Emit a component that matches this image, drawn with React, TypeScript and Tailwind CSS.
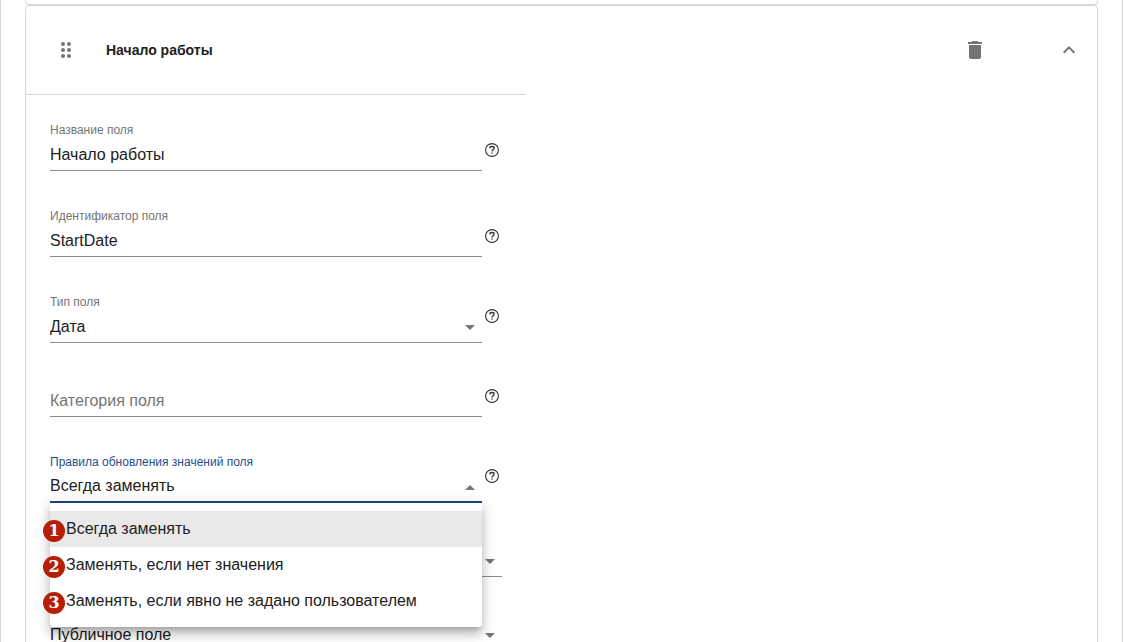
import { useState } from "react";
import type { ReactNode } from "react";
import { MdDelete, MdExpandLess } from "react-icons/md";
import { clsx } from "clsx";

const UPDATE_RULES = [
  "Всегда заменять",
  "Заменять, если нет значения",
  "Заменять, если явно не задано пользователем",
];

export default function App() {
  const [name, setName] = useState("Начало работы");
  const [identifier, setIdentifier] = useState("StartDate");
  const [category, setCategory] = useState("");

  return (
    <main className="mr-px h-screen overflow-hidden border-x border-[#d3d8de] bg-white px-6 font-['Liberation_Sans',Arial,sans-serif] text-[#212121]">
      {/* Bottom edge of the previous field card */}
      <div className="h-[5px] rounded-b border border-t-0 border-[#d3d8de]" />

      <section className="rounded border border-[#d3d8de]">
        <header className="flex h-[88px] items-center pr-4 pl-7 text-[#757575]">
          <button type="button" aria-label="Переместить" className="cursor-move">
            <DragIcon />
          </button>
          <h2 className="ml-7 flex-1 text-sm font-bold text-[#212121]">Начало работы</h2>
          <button type="button" aria-label="Удалить">
            <MdDelete className="size-6" />
          </button>
          <button type="button" aria-label="Свернуть" className="ml-[70px]">
            <MdExpandLess className="size-6" />
          </button>
        </header>

        <form className="flex max-w-[500px] flex-col gap-9 border-t border-[#d3d8de] px-6 pt-[26px] pb-10">
          <Field id="name" label="Название поля" help="top">
            <TextInput id="name" value={name} onChange={setName} />
          </Field>
          <Field id="identifier" label="Идентификатор поля" help="top">
            <TextInput id="identifier" value={identifier} onChange={setIdentifier} />
          </Field>
          <Field id="type" label="Тип поля" help="raised">
            <Select id="type" options={["Дата", "Строка", "Число"]} />
          </Field>
          <Field id="category" help="top">
            <TextInput id="category" placeholder="Категория поля" value={category} onChange={setCategory} />
          </Field>
          <UpdateRuleField />
          <Field id="storage">
            <Select id="storage" ariaLabel="Хранение" options={[""]} />
          </Field>
          <Field id="access">
            <Select id="access" ariaLabel="Доступ" options={["Публичное поле", "Приватное поле"]} />
          </Field>
        </form>
      </section>
    </main>
  );
}

function Field({
  id,
  label,
  help,
  active,
  children,
}: {
  id: string;
  label?: string;
  help?: "top" | "raised";
  active?: boolean;
  children: ReactNode;
}) {
  return (
    <div className={clsx("flex items-end gap-[3px]", !label && "pt-1.5")}>
      <div className="min-w-0 flex-1">
        {label && (
          <label
            htmlFor={id}
            className={clsx("block text-xs leading-[18px]", active ? "text-[#1f4e8c]" : "text-[#757575]")}
          >
            {label}
          </label>
        )}
        {children}
      </div>
      {help && (
        <button
          type="button"
          aria-label="Справка"
          className={clsx("mr-[3px] shrink-0", help === "raised" ? "mb-5" : "mb-3.5")}
        >
          <HelpIcon />
        </button>
      )}
    </div>
  );
}

function TextInput({
  id,
  value,
  placeholder,
  onChange,
}: {
  id: string;
  value: string;
  placeholder?: string;
  onChange: (value: string) => void;
}) {
  return (
    <input
      id={id}
      type="text"
      value={value}
      placeholder={placeholder}
      aria-label={placeholder}
      onChange={(e) => onChange(e.target.value)}
      className="block h-8 w-full border-b border-[#8c8c8c] bg-transparent text-base outline-none placeholder:text-[#757575]"
    />
  );
}

function Select({ id, options, ariaLabel }: { id: string; options: string[]; ariaLabel?: string }) {
  return (
    <div className="relative">
      <select
        id={id}
        aria-label={ariaLabel}
        className="block h-8 w-full appearance-none border-b border-[#8c8c8c] bg-transparent text-base outline-none"
      >
        {options.map((option) => (
          <option key={option}>{option}</option>
        ))}
      </select>
      <Arrow />
    </div>
  );
}

function UpdateRuleField() {
  const [open, setOpen] = useState(true);
  const [rule, setRule] = useState(UPDATE_RULES[0]);

  return (
    <Field id="rule" label="Правила обновления значений поля" help="raised" active={open}>
      <div className="relative">
        <select
          id="rule"
          value={rule}
          onChange={(e) => setRule(e.target.value)}
          onMouseDown={(e) => {
            e.preventDefault();
            setOpen(!open);
          }}
          className={clsx(
            "block h-8 w-full appearance-none bg-transparent text-base outline-none",
            open ? "border-b-2 border-[#1f477f]" : "border-b border-[#8c8c8c]"
          )}
        >
          {UPDATE_RULES.map((option) => (
            <option key={option}>{option}</option>
          ))}
        </select>
        <Arrow up={open} />

        {open && (
          <ul
            role="listbox"
            className="absolute inset-x-0 top-full z-10 rounded-b bg-white py-2 shadow-[0_5px_5px_-3px_rgba(0,0,0,0.2),0_8px_10px_1px_rgba(0,0,0,0.14),0_3px_14px_2px_rgba(0,0,0,0.12)]"
          >
            {UPDATE_RULES.map((option, index) => (
              <li
                key={option}
                role="option"
                aria-selected={option === rule}
                onClick={() => {
                  setRule(option);
                  setOpen(false);
                }}
                className={clsx(
                  "relative h-9 cursor-pointer px-4 text-base leading-9",
                  option === rule && "bg-[#e9e9e9]"
                )}
              >
                <span className="absolute top-[9px] -left-[7px] flex size-[22px] items-center justify-center rounded-full bg-[#b51f05] font-['DejaVu_Serif',serif] text-base leading-none font-bold text-white">
                  {index + 1}
                </span>
                {option}
              </li>
            ))}
          </ul>
        )}
      </div>
    </Field>
  );
}

function Arrow({ up }: { up?: boolean }) {
  return (
    <svg
      viewBox="0 0 10 5"
      fill="#757575"
      aria-hidden="true"
      className={clsx("pointer-events-none absolute right-[7px] bottom-[13px] h-[5px] w-2.5", up && "rotate-180")}
    >
      <path d="M0 0h10L5 5z" />
    </svg>
  );
}

function DragIcon() {
  return (
    <svg viewBox="0 0 24 24" fill="currentColor" aria-hidden="true" className="size-6">
      {[6, 12, 18].map((y) => (
        <g key={y}>
          <circle cx="9" cy={y} r="2" />
          <circle cx="15" cy={y} r="2" />
        </g>
      ))}
    </svg>
  );
}

function HelpIcon() {
  return (
    <svg viewBox="0 0 14 14" fill="none" stroke="#333" aria-hidden="true" className="size-3.5">
      <circle cx="7" cy="7" r="6.4" strokeWidth="1.1" />
      <path d="M4.8 5.3c0-1.1.9-1.8 2.2-1.8s2.2.7 2.2 1.7c0 1.4-2.1 1.4-2.1 3.2" strokeWidth="1.3" />
      <path d="M6.4 9.4h1.3v1.3H6.4z" fill="#333" stroke="none" />
    </svg>
  );
}
